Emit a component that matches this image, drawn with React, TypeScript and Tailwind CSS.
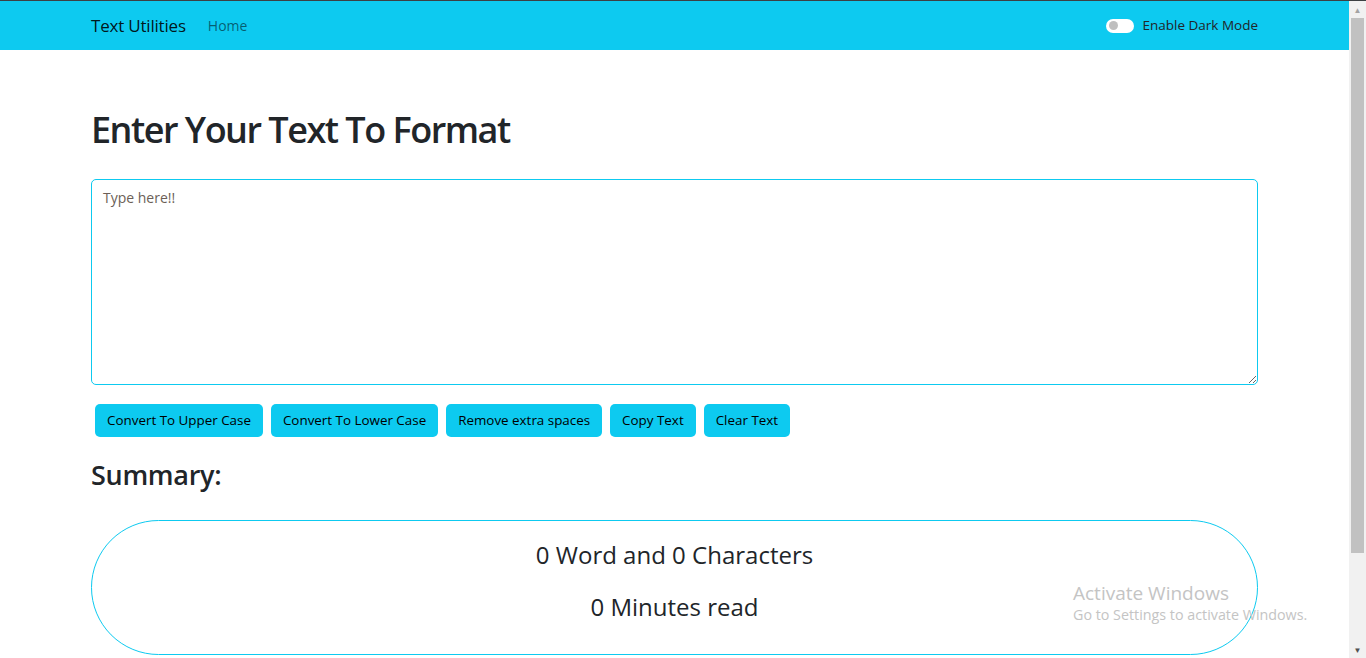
import { useState } from "react";

const buttons = [
  "Convert To Upper Case",
  "Convert To Lower Case",
  "Remove extra spaces",
  "Copy Text",
  "Clear Text",
];

export default function App() {
  const [text, setText] = useState("");
  const words = text.split(/\s+/).filter((w) => w.length > 0).length;

  return (
    <div className="flex h-[658px] w-[1366px] overflow-hidden border-t border-[#3c4043] bg-white font-['Open_Sans',sans-serif] text-[#212529]">
      <div className="relative flex-1">
        {/* Navbar */}
        <nav className="h-[49px] bg-[#0dcaf0]">
          <div className="mx-[91px] flex h-full items-center">
            <span className="text-[17px] tracking-[-0.2px] text-black/90">Text Utilities</span>
            <span className="ml-[22px] text-[14px] text-black/55">Home</span>
            <div className="ml-auto flex items-center">
              <div className="flex h-[14px] w-[28px] items-center rounded-full bg-white px-[3px]">
                <div className="h-[9px] w-[9px] rounded-full bg-[#bfbfbf]" />
              </div>
              <span className="ml-[8px] text-[13.5px]">Enable Dark Mode</span>
            </div>
          </div>
        </nav>

        {/* Main */}
        <div className="mx-[91px] pt-[56px]">
          <h1 className="text-[36px] font-semibold leading-[48px] tracking-[-1.5px]">Enter Your Text To Format</h1>
          <textarea
            value={text}
            onChange={(e) => setText(e.target.value)}
            placeholder="Type here!!"
            className="mt-[25px] block h-[206px] w-full rounded-[5px] border border-[#0dcaf0] px-[11px] py-[7px] text-[14px] text-[#212529] outline-none placeholder:text-[#6c5f57]"
          />
          <div className="mt-[19px] flex gap-[8px] pl-[4px]">
            {buttons.map((b) => (
              <button
                key={b}
                className="h-[33px] rounded-[5px] bg-[#0dcaf0] px-[12px] text-[13.4px] text-black"
              >
                {b}
              </button>
            ))}
          </div>
          <h2 className="mt-[19px] text-[27px] font-semibold leading-[38px] tracking-[-0.3px]">Summary:</h2>
          <div className="mt-[26px] flex h-[135px] flex-col items-center gap-[14px] rounded-full border border-[#0dcaf0] pt-[15px]">
            <p className="text-[24px] leading-[38px]">
              {words} Word and {text.length} Characters
            </p>
            <p className="text-[24px] leading-[38px]">{0.008 * words} Minutes read</p>
          </div>
        </div>

        {/* Windows watermark */}
        <div className="pointer-events-none absolute left-[1073px] top-[580px] text-[#c4c4c4]">
          <p className="text-[19px] leading-[24px]">Activate Windows</p>
          <p className="text-[14.3px] leading-[20px]">Go to Settings to activate Windows.</p>
        </div>
      </div>

      {/* Scrollbar */}
      <div className="flex w-[17px] flex-col bg-[#f1f1f1]">
        <div className="flex h-[17px] items-center justify-center text-[8px] text-[#a3a3a3]">▲</div>
        <div className="mx-[2px] h-[535px] bg-[#c1c1c1]" />
        <div className="mt-auto flex h-[17px] items-center justify-center text-[8px] text-[#505050]">▼</div>
      </div>
    </div>
  );
}
